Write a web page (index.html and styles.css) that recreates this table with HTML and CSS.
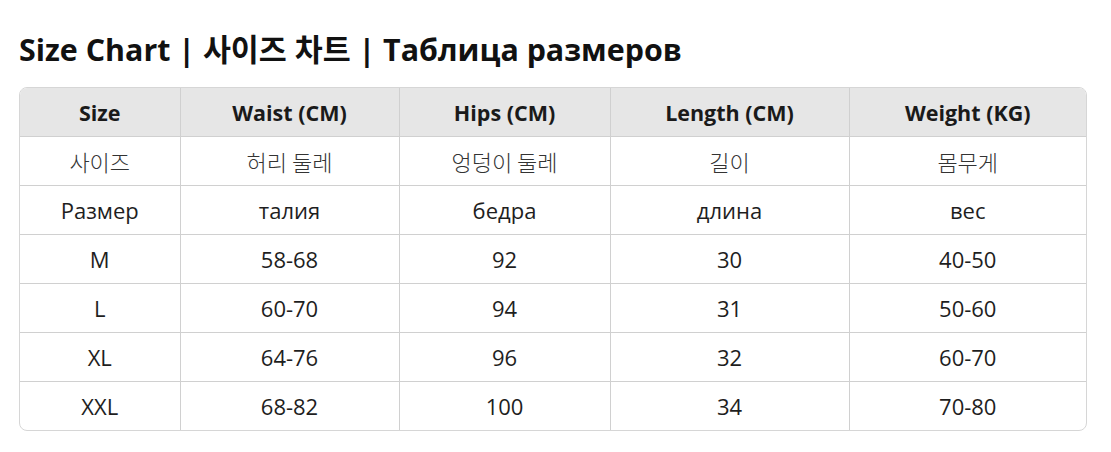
FILE: index.html
```html
<!DOCTYPE html>
<html lang="en">
<head>
<meta charset="utf-8">
<link rel="stylesheet" href="styles.css">
</head>
<body>
<div class="page">
  <h1 class="title">Size Chart | 사이즈 차트 | Таблица размеров</h1>
  <div class="table-wrap">
    <table class="chart">
      <colgroup>
        <col class="c1"><col class="c2"><col class="c3"><col class="c4"><col class="c5">
      </colgroup>
      <thead>
        <tr><th>Size</th><th>Waist (CM)</th><th>Hips (CM)</th><th>Length (CM)</th><th>Weight (KG)</th></tr>
      </thead>
      <tbody>
        <tr class="ko"><td>사이즈</td><td>허리 둘레</td><td>엉덩이 둘레</td><td>길이</td><td>몸무게</td></tr>
        <tr><td>Размер</td><td>талия</td><td>бедра</td><td>длина</td><td>вес</td></tr>
        <tr><td>M</td><td>58-68</td><td>92</td><td>30</td><td>40-50</td></tr>
        <tr><td>L</td><td>60-70</td><td>94</td><td>31</td><td>50-60</td></tr>
        <tr><td>XL</td><td>64-76</td><td>96</td><td>32</td><td>60-70</td></tr>
        <tr><td>XXL</td><td>68-82</td><td>100</td><td>34</td><td>70-80</td></tr>
      </tbody>
    </table>
  </div>
</div>
</body>
</html>
```
FILE: styles.css
```css
html, body {
  margin: 0;
  padding: 0;
  background: #ffffff;
}
body {
  font-family: "Open Sans", "Noto Sans CJK KR", sans-serif;
  color: #1a1a1a;
}
.page {
  padding: 30px 24px 0 19px;
}
.title {
  margin: 0 0 17px 0;
  font-size: 30.4px;
  line-height: 40px;
  font-weight: 700;
  color: #111;
}
.table-wrap {
  width: 1066px;
  border: 1px solid #d6d6d6;
  border-radius: 8px;
  overflow: hidden;
}
.chart {
  width: 100%;
  border-collapse: collapse;
  table-layout: fixed;
}
.c1 { width: 160px; }
.c2 { width: 219px; }
.c3 { width: 211px; }
.c4 { width: 239px; }
.c5 { width: 237px; }
.chart th, .chart td {
  height: 48px;
  padding: 0;
  text-align: center;
  vertical-align: middle;
  border-left: 1px solid #d0d0d0;
  border-top: 1px solid #d0d0d0;
  font-size: 22px;
}
.chart th:first-child, .chart td:first-child {
  border-left: none;
}
.chart thead th {
  border-top: none;
  background: #e6e6e6;
  font-weight: 700;
  font-size: 21.5px;
  color: #1a1a1a;
}
.chart td {
  font-weight: 400;
  color: #1e1e1e;
}
.chart tr.ko td {
  font-family: "Noto Sans CJK KR", sans-serif;
  font-size: 22px;
  font-weight: 300;
  color: #333;
}
```
